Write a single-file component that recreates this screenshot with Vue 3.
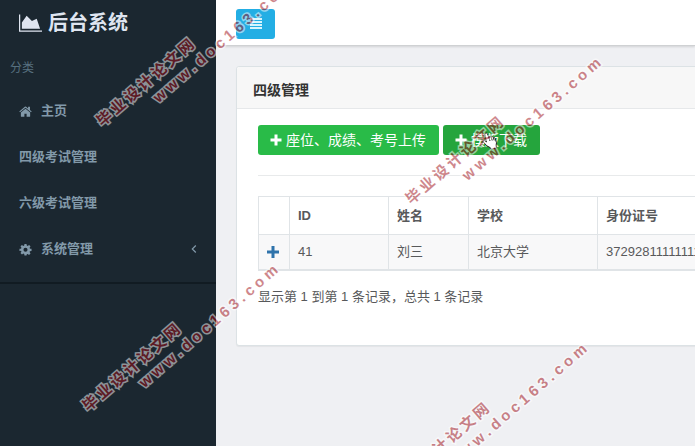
<script setup>
const menu = [
  { label: '主页', icon: 'home' },
  { label: '四级考试管理' },
  { label: '六级考试管理' },
  { label: '系统管理', icon: 'gear', sub: true },
]

const rows = [
  { id: '41', name: '刘三', school: '北京大学', card: '372928111111111111' },
]

const marks = [
  { x: 104, y: 117 },
  { x: 413, y: 195 },
  { x: 90, y: 402 },
  { x: 399, y: 481 },
]
const markName = [...'毕业设计论文网']
const markSite = [...'www.doc163.com']
</script>

<template>
  <div class="page">
    <aside class="sidebar">
      <a class="brand" href="#">
        <svg class="brand-icon" viewBox="0 0 24 18" aria-hidden="true">
          <path d="M0 0h1.300v16.700H24V18H0z" />
          <path d="M3 15V8.500L8 1.500l5.500 5.500L18.500 4.500 22 15z" />
        </svg>
        <span>后台系统</span>
      </a>
      <p class="section">分类</p>
      <nav>
        <ul class="menu">
          <li v-for="item in menu" :key="item.label">
            <a href="#" class="menu-link">
              <svg v-if="item.icon === 'home'" class="menu-icon" viewBox="0 0 14 14" aria-hidden="true">
                <path d="M7 4 2 8.200V12q0 .6.600.6h3.200V9.300h2.400v3.300h3.200q.6 0 .6-.6V8.200z" />
                <path d="M13.700 6.900 11.800 5.300V2H9.800v1.700L7.700 1.900Q7 1.400 6.300 1.900L.3 6.900l.8 1L7 3l5.900 4.900z" />
              </svg>
              <svg v-else-if="item.icon === 'gear'" class="menu-icon" viewBox="0 0 14 14" aria-hidden="true">
                <path
                  fill-rule="evenodd"
                  d="M5.900 1h2.200l.3 1.700 1 .4 1.400-1 1.600 1.500-1 1.500.4 1 1.700.2v2.200l-1.700.3-.4 1 1 1.400-1.600 1.600-1.400-1-1 .4L8.100 13.500H5.900l-.3-1.700-1-.4-1.400 1-1.600-1.600 1-1.400-.4-1L.5 8.500V6.300l1.700-.2.4-1-1-1.500 1.600-1.500 1.400 1 1-.4zM7 5.100a2.200 2.200 0 1 0 0 4.400 2.200 2.200 0 0 0 0-4.400z"
                />
              </svg>
              <span>{{ item.label }}</span>
              <svg v-if="item.sub" class="chevron" viewBox="0 0 6 10" aria-hidden="true">
                <path d="M4.800 1.500 1.300 5l3.500 3.500" />
              </svg>
            </a>
          </li>
        </ul>
      </nav>
    </aside>

    <div class="main">
      <header class="topbar">
        <button class="toggle" type="button" aria-label="菜单">
          <svg viewBox="0 0 12 12" aria-hidden="true">
            <path d="M0 0h12v2H0zM0 3h12v2H0zM0 6h12v2H0zM0 9h12v2H0z" />
          </svg>
        </button>
      </header>

      <main class="content">
        <section class="panel">
          <h1 class="panel-head">四级管理</h1>
          <div class="panel-body">
            <div class="actions">
              <button class="btn" type="button">
                <svg class="plus" viewBox="0 0 12 12" aria-hidden="true">
                  <path d="M4.500.5h3v4h4v3h-4v4h-3v-4h-4v-3h4z" />
                </svg>
                座位、成绩、考号上传
              </button>
              <button class="btn btn-active" type="button">
                <svg class="plus" viewBox="0 0 12 12" aria-hidden="true">
                  <path d="M4.500.5h3v4h4v3h-4v4h-3v-4h-4v-3h4z" />
                </svg>
                模版下载
                <svg class="pointer" viewBox="0 0 16 18" aria-hidden="true">
                  <path
                    d="M3.500 1.200c1-.6 1.700.1 2 .9L7 6l.2-1.300c.9-.6 1.600-.1 1.900.7l.4-.7c.9-.4 1.500 0 1.800.9 1-.4 1.600.1 1.900 1l1.300 4.200-.5 3.200.6 2-5.400 1.300-.9-1.600-3.500-1.900L1.300 10c-.5-1.200.8-1.900 1.700-1.200l1.500 1.100L2.800 2.700c-.1-.6.100-1.200.7-1.500z"
                  />
                  <path d="M7 6l1 3M9.300 5.500l.9 3M11.500 6l.7 2.400" />
                </svg>
              </button>
            </div>
            <hr />
            <table>
              <colgroup>
                <col class="c-open" />
                <col class="c-id" />
                <col class="c-name" />
                <col class="c-school" />
                <col />
              </colgroup>
              <thead>
                <tr>
                  <th></th>
                  <th>ID</th>
                  <th>姓名</th>
                  <th>学校</th>
                  <th>身份证号</th>
                </tr>
              </thead>
              <tbody>
                <tr v-for="row in rows" :key="row.id">
                  <td>
                    <a class="expand" href="#" aria-label="展开">
                      <svg viewBox="0 0 12 12" aria-hidden="true">
                        <path d="M4.500 0h3v4.500H12v3H7.500V12h-3V7.500H0v-3h4.500z" />
                      </svg>
                    </a>
                  </td>
                  <td>{{ row.id }}</td>
                  <td>{{ row.name }}</td>
                  <td>{{ row.school }}</td>
                  <td>{{ row.card }}</td>
                </tr>
              </tbody>
            </table>
            <p class="info">显示第 1 到第 1 条记录，总共 1 条记录</p>
          </div>
        </section>
      </main>
    </div>

    <div class="marks" aria-hidden="true">
      <div
        v-for="(m, i) in marks"
        :key="i"
        class="mark"
        :style="{ left: m.x + 'px', top: m.y + 'px' }"
      >
        <div class="mark-name"><span v-for="(ch, k) in markName" :key="k">{{ ch }}</span></div>
        <div class="mark-site"><span v-for="(ch, k) in markSite" :key="k">{{ ch }}</span></div>
      </div>
    </div>
  </div>
</template>

<style>
body {
  margin: 0;
  background: #eff0f3;
}
</style>

<style scoped>
.page {
  position: relative;
  display: flex;
  min-height: 100vh;
  overflow: hidden;
  font-family: "Liberation Sans", "Noto Sans CJK SC", sans-serif;
  font-size: 13px;
  line-height: 20px;
  color: #58595b;
}
a {
  color: inherit;
  text-decoration: none;
}
.sidebar {
  flex: 0 0 216px;
  background: #1b2730;
  color: #8299a9;
}
.brand {
  display: flex;
  align-items: center;
  gap: 6px;
  height: 45px;
  padding-left: 19px;
  font-size: 20px;
  font-weight: 700;
  color: #dfe5f0;
}
.brand-icon {
  width: 23px;
  height: 18px;
  fill: currentColor;
}
.section {
  margin: 0;
  padding: 13px 10px 10px;
  font-size: 12px;
  color: #57707f;
}
.menu {
  margin: 0;
  padding: 0 0 10px;
  list-style: none;
  border-bottom: 2px solid #111b22;
}
.menu-link {
  display: flex;
  align-items: center;
  gap: 9px;
  height: 46px;
  padding: 0 19px;
  font-weight: 700;
}
.menu-icon {
  width: 13px;
  height: 13px;
  fill: currentColor;
}
.chevron {
  width: 6px;
  height: 10px;
  margin-left: auto;
  fill: none;
  stroke: currentColor;
  stroke-width: 1.2;
}
.main {
  flex: 1;
  min-width: 0;
}
.topbar {
  display: flex;
  align-items: center;
  height: 46px;
  padding: 2px 20px 0;
  box-sizing: border-box;
  background: #fff;
  border-bottom: 1px solid #cfd1d3;
  box-shadow: 0 1px 2px rgba(0, 0, 0, 0.12);
}
.toggle {
  display: flex;
  align-items: center;
  justify-content: center;
  width: 39px;
  height: 30px;
  padding: 0;
  border: 0;
  border-radius: 3px;
  background: #23aee4;
}
.toggle svg {
  width: 12px;
  height: 12px;
  fill: #d8f4fd;
}
.content {
  padding: 20px;
}
.panel {
  min-width: 680px;
  background: #fff;
  border: 1px solid #dce2e5;
  border-radius: 3px;
  box-shadow: 0 1px 1px rgba(0, 0, 0, 0.05);
}
.panel-head {
  margin: 0;
  padding: 13px 16px 8px;
  font-size: 14px;
  font-weight: 700;
  color: #333;
  background: #f7f7f7;
  border-bottom: 1px solid #e6e8ea;
  border-radius: 3px 3px 0 0;
}
.panel-body {
  padding: 16px 21px 38px;
}
.actions {
  display: flex;
  gap: 4px;
}
.btn {
  position: relative;
  display: flex;
  align-items: center;
  gap: 4px;
  height: 30px;
  padding: 0 13px 0 12px;
  border: 0;
  border-radius: 3px;
  background: #29bb48;
  color: #fff;
  font: inherit;
  font-size: 14px;
}
.btn-active {
  background: #25a53d;
}
.plus {
  width: 12px;
  height: 12px;
  fill: currentColor;
}
.pointer {
  position: absolute;
  left: 39px;
  top: 7px;
  width: 16px;
  height: 18px;
  fill: #fff;
  stroke: #222;
  stroke-width: 1;
}
hr {
  height: 1px;
  margin: 20px 0;
  border: 0;
  background: #e8eaeb;
}
table {
  width: 100%;
  table-layout: fixed;
  border-collapse: collapse;
}
.c-open {
  width: 31px;
}
.c-id {
  width: 99px;
}
.c-name {
  width: 80px;
}
.c-school {
  width: 129px;
}
th,
td {
  padding: 7px 8px;
  border: 1px solid #e0e4e7;
  text-align: left;
}
th {
  padding: 9px 8px 8px;
}
tbody tr {
  background: #f8f8f9;
}
tbody tr:last-child td {
  border-bottom-width: 2px;
}
.expand {
  display: flex;
  color: #2f73ab;
}
.expand svg {
  width: 12px;
  height: 12px;
  fill: currentColor;
}
.info {
  margin: 16px 0 0;
}
.marks {
  position: absolute;
  inset: 0;
  overflow: hidden;
  opacity: 0.5;
  pointer-events: none;
}
.mark {
  position: absolute;
  display: flex;
  flex-direction: column;
  gap: 2px;
  margin: -8px 0 0 -7px;
  font-size: 15px;
  font-weight: 700;
  line-height: 17px;
  color: #a0101a;
  -webkit-text-stroke: 3px #fff;
  paint-order: stroke fill;
  transform: rotate(-41deg);
  transform-origin: 8px 9px;
}
.mark-name {
  display: flex;
  gap: 3px;
}
.mark-site {
  display: flex;
  gap: 4px;
  padding-left: 58px;
}
</style>
